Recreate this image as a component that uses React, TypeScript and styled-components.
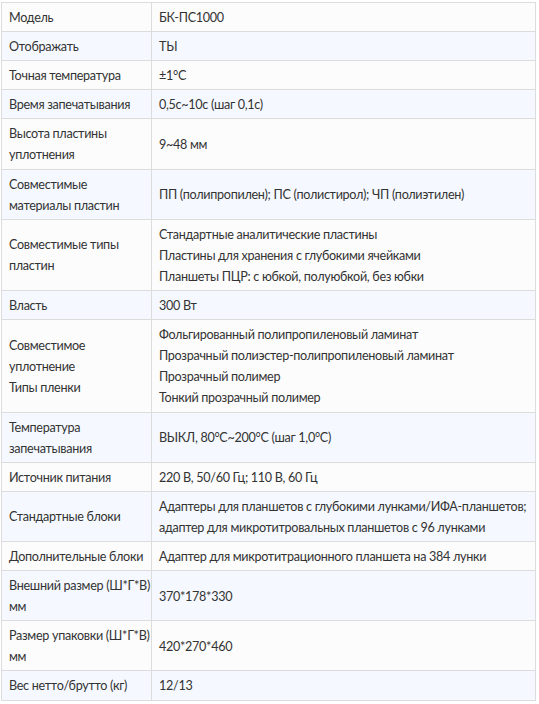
import React from "react";
import styled, { createGlobalStyle } from "styled-components";

const Global = createGlobalStyle`
  html, body { margin: 0; padding: 0; background: #ffffff; }
  body { font-family: "Lato", Arial, sans-serif; }
`;

const Page = styled.div`
  padding: 2px 4px 0 1px;
`;

const Table = styled.table`
  width: 535px;
  border-collapse: collapse;
  table-layout: fixed;
  font-family: "Lato", Arial, sans-serif;
  font-size: 12.6px;
  letter-spacing: -0.3px;
  color: #333333;
`;

const Row = styled.tr<{ $alt: boolean }>`
  background: ${(p) => (p.$alt ? "#f5f9ff" : "#fcfcfc")};
`;

const Cell = styled.td<{ $label?: boolean }>`
  border: 1px solid #dcdcdc;
  padding: 4px 7px 3px 7px;
  line-height: 21.1px;
  vertical-align: middle;
  width: ${(p) => (p.$label ? "135px" : "auto")};
`;

const Line = styled.div`
  white-space: nowrap;
`;

const rows: [string[], string[]][] = [
  [["Модель"], ["БК-ПС1000"]],
  [["Отображать"], ["ТЫ"]],
  [["Точная температура"], ["±1°C"]],
  [["Время запечатывания"], ["0,5с~10с (шаг 0,1с)"]],
  [["Высота пластины", "уплотнения"], ["9~48 мм"]],
  [["Совместимые", "материалы пластин"], ["ПП (полипропилен); ПС (полистирол); ЧП (полиэтилен)"]],
  [
    ["Совместимые типы", "пластин"],
    [
      "Стандартные аналитические пластины",
      "Пластины для хранения с глубокими ячейками",
      "Планшеты ПЦР: с юбкой, полуюбкой, без юбки",
    ],
  ],
  [["Власть"], ["300 Вт"]],
  [
    ["Совместимое", "уплотнение", "Типы пленки"],
    [
      "Фольгированный полипропиленовый ламинат",
      "Прозрачный полиэстер-полипропиленовый ламинат",
      "Прозрачный полимер",
      "Тонкий прозрачный полимер",
    ],
  ],
  [["Температура", "запечатывания"], ["ВЫКЛ, 80°C~200°C (шаг 1,0°C)"]],
  [["Источник питания"], ["220 В, 50/60 Гц; 110 В, 60 Гц"]],
  [
    ["Стандартные блоки"],
    [
      "Адаптеры для планшетов с глубокими лунками/ИФА-планшетов;",
      "адаптер для микротитровальных планшетов с 96 лунками",
    ],
  ],
  [["Дополнительные блоки"], ["Адаптер для микротитрационного планшета на 384 лунки"]],
  [["Внешний размер (Ш*Г*В)", "мм"], ["370*178*330"]],
  [["Размер упаковки (Ш*Г*В)", "мм"], ["420*270*460"]],
  [["Вес нетто/брутто (кг)"], ["12/13"]],
];

export default function App() {
  return (
    <Page>
      <Global />
      <Table>
        <tbody>
          {rows.map(([label, value], i) => (
            <Row key={i} $alt={i % 2 === 1}>
              <Cell $label>
                {label.map((l, j) => (
                  <Line key={j}>{l}</Line>
                ))}
              </Cell>
              <Cell>
                {value.map((l, j) => (
                  <Line key={j}>{l}</Line>
                ))}
              </Cell>
            </Row>
          ))}
        </tbody>
      </Table>
    </Page>
  );
}
